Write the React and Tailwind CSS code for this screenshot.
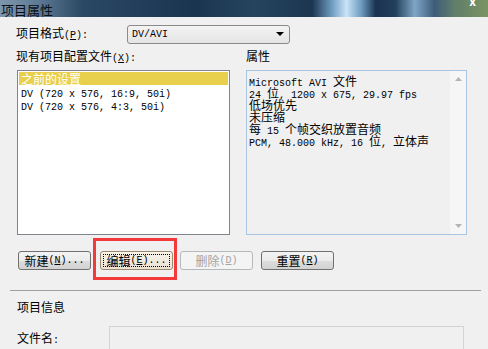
const mono = "font-['Liberation_Mono',monospace] text-[10px]";

const Mixed = ({ text }) => {
  const parts = text.split(/([\u0000-\u00ff]+)/);
  return parts.map((p, i) =>
    i % 2 === 1 ? (
      <span key={i} className={mono + " whitespace-pre"}>
        {p}
      </span>
    ) : (
      <span key={i}>{p}</span>
    )
  );
};

const Key = ({ k }) => (
  <span className={mono}>
    (<span className="underline">{k}</span>)
  </span>
);

const Button = ({ label, k, dots, variant }) => {
  const base =
    "w-[73px] h-[19px] rounded-[3px] border flex items-center justify-center leading-[13px]";
  if (variant === "focus") {
    return (
      <div className={base + " border-[#9c8a70] bg-[linear-gradient(#f8f3ea,#ebe2d4)] p-[2px]"}>
        <div className="w-full h-full border border-dotted border-black flex items-center justify-center">
          {label}
          <Key k={k} />
          {dots && <span className={mono}>...</span>}
        </div>
      </div>
    );
  }
  if (variant === "disabled") {
    return (
      <div className={base + " border-[#b5b9bc] bg-[#f4f4f4] text-[#a3a3a3]"}>
        {label}
        <Key k={k} />
      </div>
    );
  }
  return (
    <div className={base + " border-[#707070] bg-[linear-gradient(#f3f3f3_0%,#ebebeb_50%,#dddddd_51%,#d2d2d2_100%)]"}>
      {label}
      <Key k={k} />
      {dots && <span className={mono}>...</span>}
    </div>
  );
};

const props = [
  "Microsoft AVI 文件",
  "24 位, 1200 x 675, 29.97 fps",
  "低场优先",
  "未压缩",
  "每 15 个帧交织放置音频",
  "PCM, 48.000 kHz, 16 位, 立体声",
];

export default function App() {
  return (
    <div className="w-[488px] h-[349px] overflow-hidden bg-[#f0f0f0] text-black text-[12px] font-['Noto_Sans_CJK_SC',sans-serif] flex flex-col">
      <div className="h-[21px] flex justify-between items-start bg-[linear-gradient(90deg,#7d96ad_0%,#5d7a94_8%,#2a4763_17%,#1b3551_40%,#26445f_52%,#1c3650_64%,#6f9cc0_68%,#c8e4f8_71%,#6f9cc0_74%,#1a3350_77%,#223f5c_81%,#7fa6c6_85%,#3d5c7a_89%,#5f7d6a_93%,#7c9462_100%)]">
        <span className="pl-px pt-[3px] leading-[14px] text-[13px] text-[#0a0f14]">项目属性</span>
        <span className="mr-[12px] -mt-[5px] leading-[12px] text-[12px] text-white font-bold">x</span>
      </div>
      <div className="h-px bg-[#dfe6ec]" />

      <div className="relative flex flex-col px-[16px]">
        <div className="mt-[8px] flex items-center h-[19px]">
          <span className="w-[111px] leading-[14px]">
            项目格式
            <Key k="P" />
            <span className={mono}>:</span>
          </span>
          <div className="w-[163px] h-[19px] rounded-[3px] border border-[#8a8a8a] bg-[linear-gradient(#f4f4f4,#e4e4e4)] flex items-center justify-between pl-[4px] pr-[5px]">
            <span className={mono}>DV/AVI</span>
            <svg width="8" height="5" viewBox="0 0 8 5">
              <polygon points="0,0 8,0 4,4" fill="#000" />
            </svg>
          </div>
        </div>

        <div className="mt-[5px] flex leading-[14px]">
          <span className="w-[230px]">
            现有项目配置文件
            <Key k="X" />
            <span className={mono}>:</span>
          </span>
          <span>属性</span>
        </div>

        <div className="mt-[4px] flex h-[165px]">
          <div className="ml-px w-[213px] border border-[#80848c] bg-white p-px flex flex-col">
            <div className="h-[13px] leading-[13px] bg-[#e8cf4c] text-white px-[2px]">之前的设置</div>
            <div className="h-[13px] leading-[13px] px-[2px]">
              <Mixed text="DV (720 x 576, 16:9, 50i)" />
            </div>
            <div className="h-[13px] leading-[13px] px-[2px]">
              <Mixed text="DV (720 x 576, 4:3, 50i)" />
            </div>
          </div>
          <div className="ml-[16px] w-[221px] border border-[#a9c5e2] bg-[#f0f0f0] flex">
            <div className="flex-1 pt-[4px] pl-[2px] flex flex-col">
              {props.map((t, i) => (
                <div key={i} className="h-[12px] leading-[12px] whitespace-nowrap">
                  <Mixed text={t} />
                </div>
              ))}
            </div>
            <div className="w-[16px] bg-[#f6f6f6] flex flex-col justify-between items-center py-[6px]">
              <svg width="7" height="4" viewBox="0 0 7 4">
                <polygon points="0,4 7,4 3.5,0" fill="#b4b4b4" />
              </svg>
              <svg width="7" height="4" viewBox="0 0 7 4">
                <polygon points="0,0 7,0 3.5,4" fill="#b4b4b4" />
              </svg>
            </div>
          </div>
        </div>

        <div className="mt-[16px] ml-[2px] flex">
          <Button label="新建" k="N" dots />
          <div className="ml-[9px]">
            <Button label="编辑" k="E" dots variant="focus" />
          </div>
          <div className="ml-[7px]">
            <Button label="删除" k="D" variant="disabled" />
          </div>
          <div className="ml-[8px]">
            <Button label="重置" k="R" />
          </div>
        </div>

        <div className="absolute left-[93px] top-[221px] w-[84px] h-[42px] border-[3px] border-[#f23a3a]" />

        <div className="mt-[20px] -ml-[6px] w-[471px] h-px bg-[#a0a0a0]" />

        <div className="mt-[9px] ml-px leading-[14px]">项目信息</div>

        <div className="mt-[12px] ml-px flex items-start">
          <span className="w-[92px] pt-[5px] leading-[14px]">
            文件名<span className={mono}>:</span>
          </span>
          <div className="w-[355px] h-[24px] border border-[#d4d4d4] bg-[#f0f0f0]" />
        </div>
      </div>
    </div>
  );
}
